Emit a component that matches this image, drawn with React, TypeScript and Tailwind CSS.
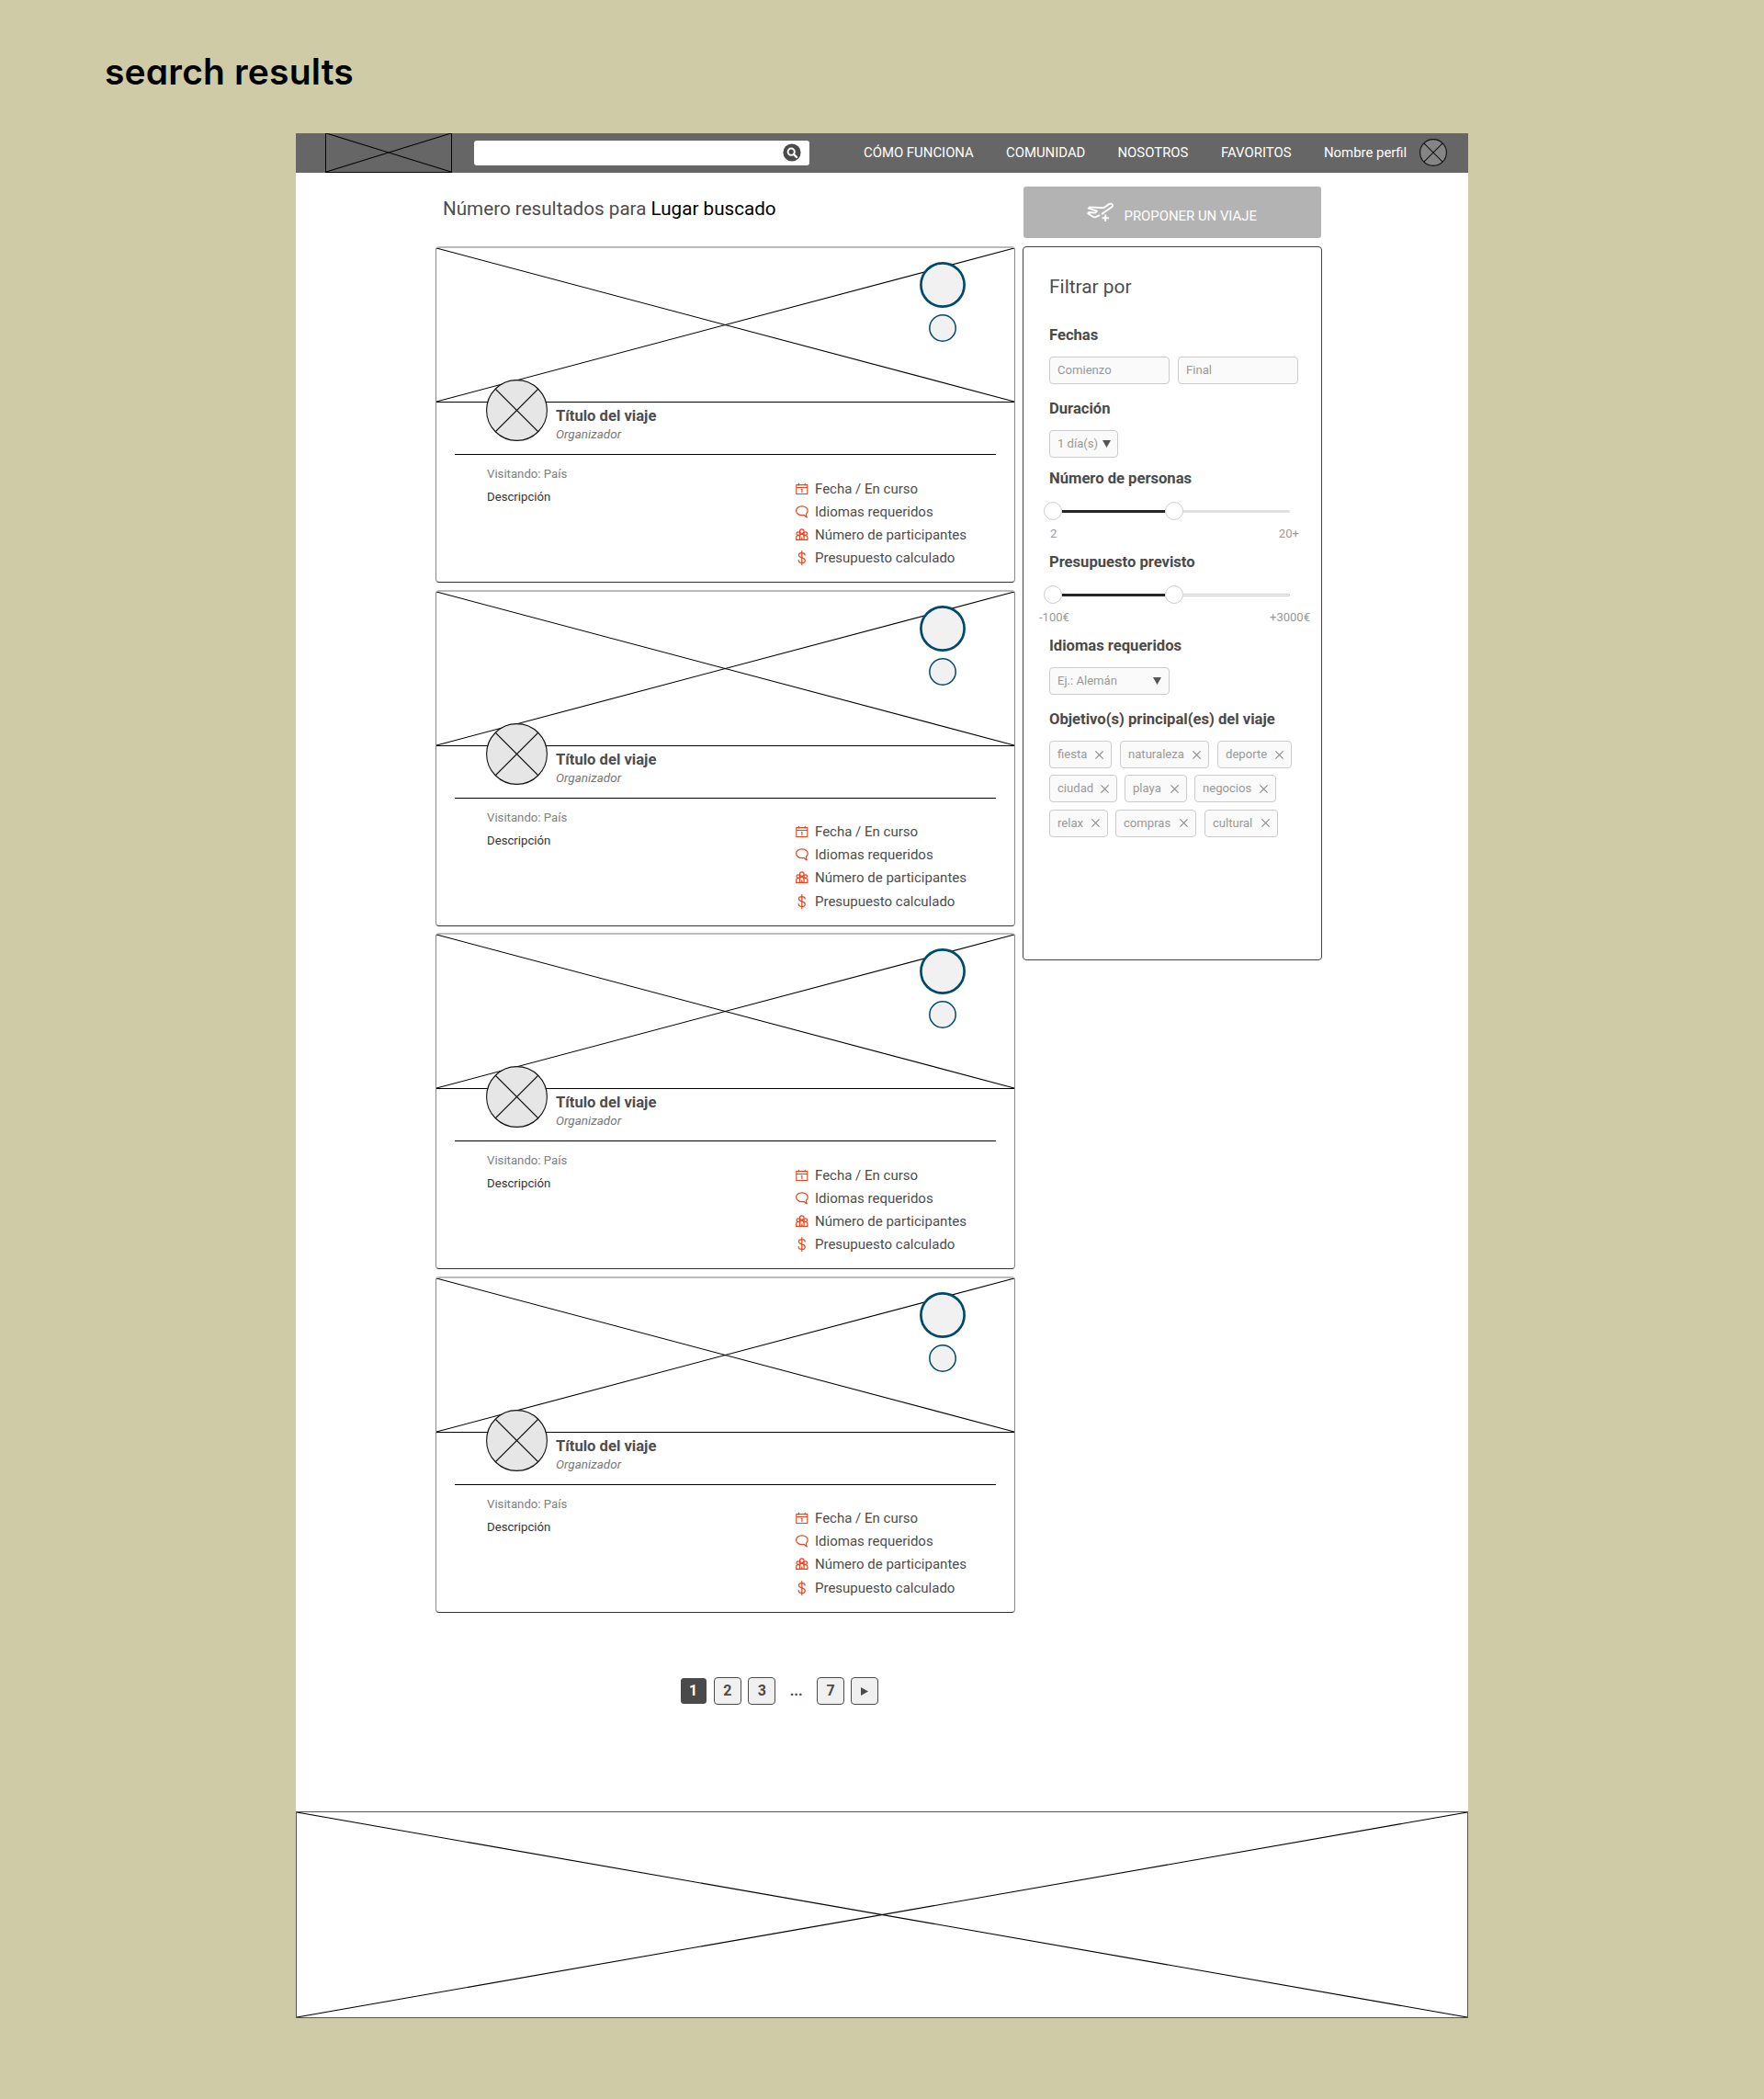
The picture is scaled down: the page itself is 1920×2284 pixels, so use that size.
import { ReactNode } from "react";

const RESULTS = [1, 2, 3, 4];

const TAGS: { label: string; width: string; gap: string }[][] = [
  [
    { label: "fiesta", width: "w-[68px]", gap: "" },
    { label: "naturaleza", width: "w-[97px]", gap: "ml-[9px]" },
    { label: "deporte", width: "w-[81px]", gap: "ml-[9px]" },
  ],
  [
    { label: "ciudad", width: "w-[74px]", gap: "" },
    { label: "playa", width: "w-[68px]", gap: "ml-2" },
    { label: "negocios", width: "w-[89px]", gap: "ml-2" },
  ],
  [
    { label: "relax", width: "w-[64px]", gap: "" },
    { label: "compras", width: "w-[88px]", gap: "ml-2" },
    { label: "cultural", width: "w-[80px]", gap: "ml-[9px]" },
  ],
];

function Cross() {
  return (
    <svg className="block h-full w-full" viewBox="0 0 100 100" preserveAspectRatio="none">
      <path d="M0 0L100 100M0 100L100 0" stroke="#000" strokeWidth="1.1" vectorEffect="non-scaling-stroke" fill="none" />
    </svg>
  );
}

function Avatar({ size, fill, className = "" }: { size: number; fill: string; className?: string }) {
  const r = size / 2 - 0.6;
  const c = size / 2;
  const d = r * 0.707;
  return (
    <svg className={className} width={size} height={size} viewBox={`0 0 ${size} ${size}`} fill="none" stroke="#111" strokeWidth="1.1">
      <circle cx={c} cy={c} r={r} fill={fill} />
      <path d={`M${c - d} ${c - d}L${c + d} ${c + d}M${c - d} ${c + d}L${c + d} ${c - d}`} />
    </svg>
  );
}

function CalendarIcon() {
  return (
    <svg width="14" height="14" viewBox="0 0 14 14" fill="none" stroke="#e8431a" strokeWidth="1.1">
      <path d="M.8 2.6H12.8V12.5H.8ZM.8 5.5H12.8M3.5 .8V3.6M10.2 .8V3.6M5.8 7.5H6.9V11" />
    </svg>
  );
}

function BubbleIcon() {
  return (
    <svg width="14" height="14" viewBox="0 0 14 14" fill="none" stroke="#e8431a" strokeWidth="1.2" strokeLinejoin="round">
      <path d="M6.9 .9C3.3 .9 .6 3 .6 5.8S3.3 10.7 6.9 10.7C7.8 10.7 8.6 10.6 9.3 10.4C10 11.5 11 12.4 12.3 12.9C11.7 11.7 11.4 10.4 11.5 9.1C12.6 8.2 13.2 7.1 13.2 5.8C13.2 3 10.5 .9 6.9 .9Z" />
    </svg>
  );
}

function PeopleIcon() {
  return (
    <svg width="14" height="14" viewBox="0 0 14 14" fill="none" stroke="#e8431a" strokeWidth="1.2">
      <circle cx="6.8" cy="3.1" r="2.3" />
      <circle cx="2.8" cy="5.6" r="1.8" />
      <circle cx="10.8" cy="5.6" r="1.8" />
      <path d="M4.5 12.2V9.4C4.5 7.2 5.4 6.2 6.8 6.2S9.1 7.2 9.1 9.4V12.2M.7 12.2V9.8C.7 8.4 1.4 7.6 2.8 7.6C3.4 7.6 4 7.8 4.4 8.2M12.9 12.2V9.8C12.9 8.4 12.2 7.6 10.8 7.6C10.2 7.6 9.6 7.8 9.2 8.2M.1 12.3H13.5M6.8 9.6V12.2" />
    </svg>
  );
}

function DollarIcon() {
  return (
    <svg width="14" height="16" viewBox="0 0 14 16" fill="none" stroke="#e8431a" strokeWidth="1.2" strokeLinecap="round">
      <path d="M6.8 .6V15.4M10.2 5C10.2 3.4 8.8 2.6 6.8 2.6S3.4 3.5 3.4 5.1C3.4 6.8 5 7.3 6.8 7.9S10.3 9.2 10.3 10.9S8.8 13.4 6.8 13.4S3.2 12.5 3.2 10.7" />
    </svg>
  );
}

function PlaneIcon() {
  return (
    <svg className="shrink-0" width="32" height="22" viewBox="0 0 32 22" fill="none" stroke="#fff" strokeWidth="1.9" strokeLinejoin="round" strokeLinecap="round">
      <path d="M17.6 12.6L28.2 5.2C29.6 4.1 29.4 1.8 27.4 1.6C26.4 1.5 25.6 1.9 24.8 2.4L19.2 6.2L4 5.4L2.6 6.6L12 9.6L10 11.6L3.4 11L2.2 12.2L8 16C9 16.5 10.2 16.4 11.2 15.9L14.4 14.4" />
      <path d="M21.2 13.6V21M17.5 17.3H24.9" strokeLinecap="butt" />
    </svg>
  );
}

function Caret({ className = "" }: { className?: string }) {
  return (
    <svg className={className} width="9" height="8" viewBox="0 0 9 8">
      <path d="M0 0H9L4.5 8Z" fill="#555" />
    </svg>
  );
}

function Detail({ icon, children }: { icon: ReactNode; children: ReactNode }) {
  return (
    <li className="flex h-[25.2px] items-center">
      <span className="flex w-[21px] items-center">{icon}</span>
      <span className="text-[15px] leading-5 text-[#4d4d4d]">{children}</span>
    </li>
  );
}

function TripCard() {
  return (
    <article className="relative h-[366px] w-[631px] rounded-[4px] border border-t-2 border-[#8a8a8a] border-t-[#bbb] border-b-[#333] bg-white">
      <div className="h-[168px] border-b border-black">
        <Cross />
      </div>
      <div className="absolute top-[15px] right-[53.5px] flex w-[50px] flex-col items-center gap-[7px]">
        <svg width="50" height="50" viewBox="0 0 50 50">
          <circle cx="25" cy="25" r="23.6" fill="#f1f1f1" stroke="#004a6e" strokeWidth="2.7" />
        </svg>
        <svg width="30" height="30" viewBox="0 0 30 30">
          <circle cx="15" cy="15" r="14.2" fill="#f1f1f1" stroke="#004a6e" strokeWidth="1.5" />
        </svg>
      </div>
      <Avatar size={67} fill="#e6e6e6" className="absolute top-[143px] left-[54px]" />
      <div className="mx-5 h-[57px] border-b border-black pt-[5px] pl-[110px]">
        <h3 className="text-[16.6px] leading-5 font-bold text-[#4d4d4d]">Título del viaje</h3>
        <p className="mt-px text-[13.5px] leading-4 text-[#777] italic">Organizador</p>
      </div>
      <div className="flex justify-between pl-[55px]">
        <div className="pt-[13px] text-[13.2px]">
          <p className="leading-4 text-[#808080]">Visitando: País</p>
          <p className="mt-[9px] leading-4 text-[#333]">Descripción</p>
        </div>
        <ul className="w-[238px] pt-6">
          <Detail icon={<CalendarIcon />}>Fecha / En curso</Detail>
          <Detail icon={<BubbleIcon />}>Idiomas requeridos</Detail>
          <Detail icon={<PeopleIcon />}>Número de participantes</Detail>
          <Detail icon={<DollarIcon />}>Presupuesto calculado</Detail>
        </ul>
      </div>
    </article>
  );
}

function Field({ children, className = "" }: { children: ReactNode; className?: string }) {
  return (
    <div className={`flex h-[30px] items-center rounded-[4px] border border-[#ccc] bg-[#fafafa] pl-2 text-[13.1px] leading-4 text-[#999] ${className}`}>
      {children}
    </div>
  );
}

function FilterTitle({ children, className = "" }: { children: ReactNode; className?: string }) {
  return <h3 className={`text-[16.6px] leading-5 font-bold whitespace-nowrap text-[#4a4a4a] ${className}`}>{children}</h3>;
}

function Slider({ hollow = false }: { hollow?: boolean }) {
  return (
    <div className="-ml-[6px] flex h-5 w-[268px] items-center">
      <span className="h-5 w-5 shrink-0 rounded-full border border-[#ccc] bg-white" />
      <span className="h-[3px] w-[112px] bg-[#262626]" />
      <span className="h-5 w-5 shrink-0 rounded-full border border-[#ccc] bg-white" />
      <span className={`h-[3px] flex-1 rounded-r-sm ${hollow ? "border border-l-0 border-[#ccc] bg-white" : "bg-[#e0e0e0]"}`} />
    </div>
  );
}

function Filters() {
  return (
    <section className="mt-[9px] h-[777px] w-[326px] rounded-[4px] border border-[#444] bg-white pt-[31px] pl-[28px]">
      <h2 className="text-[20.9px] leading-6 text-[#4d4d4d]">Filtrar por</h2>
      <FilterTitle className="mt-[31px]">Fechas</FilterTitle>
      <div className="mt-[13px] flex gap-[9px]">
        <Field className="w-[131px]">Comienzo</Field>
        <Field className="w-[131px]">Final</Field>
      </div>
      <FilterTitle className="mt-[17px]">Duración</FilterTitle>
      <Field className="mt-[13px] w-[75px]">
        1 día(s)
        <Caret className="ml-[5px]" />
      </Field>
      <FilterTitle className="mt-[13px]">Número de personas</FilterTitle>
      <div className="mt-[15px]">
        <Slider />
      </div>
      <div className="mt-[7px] flex w-[272px] justify-between pl-px text-[13.1px] leading-4 text-[#999]">
        <span>2</span>
        <span>20+</span>
      </div>
      <FilterTitle className="mt-[13px]">Presupuesto previsto</FilterTitle>
      <div className="mt-[15px]">
        <Slider hollow />
      </div>
      <div className="mt-[7px] -ml-[11px] flex w-[295px] justify-between text-[13px] leading-4 text-[#999]">
        <span>-100€</span>
        <span>+3000€</span>
      </div>
      <FilterTitle className="mt-[13px]">Idiomas requeridos</FilterTitle>
      <Field className="mt-[13px] w-[131px] justify-between pr-2">
        Ej.: Alemán
        <Caret />
      </Field>
      <FilterTitle className="mt-[17px]">Objetivo(s) principal(es) del viaje</FilterTitle>
      <div className="mt-[13px] flex flex-col gap-[7.3px]">
        {TAGS.map((row, i) => (
          <div key={i} className="flex">
            {row.map((tag) => (
              <Field key={tag.label} className={`justify-between pr-[8px] ${tag.width} ${tag.gap}`}>
                {tag.label}
                <svg width="9" height="9" viewBox="0 0 9 9" stroke="#888" strokeWidth="1.1">
                  <path d="M.4 .4L8.6 8.6M.4 8.6L8.6 .4" />
                </svg>
              </Field>
            ))}
          </div>
        ))}
      </div>
    </section>
  );
}

function PageButton({ children, active = false }: { children: ReactNode; active?: boolean }) {
  return (
    <span
      className={`flex items-center justify-center border border-[#4a4a4a] text-[16px] leading-5 font-bold ${
        active ? "m-px h-[28px] w-[28px] rounded-[3px] bg-[#4a4a4a] text-white" : "h-[30px] w-[30px] rounded-[4px] bg-[#f0f0f0] text-[#4a4a4a]"
      }`}
    >
      {children}
    </span>
  );
}

export default function App() {
  return (
    <div className="h-[2284px] w-[1920px] overflow-hidden bg-[#cfcba6] font-['Roboto',sans-serif]">
      <h1 className="h-[145px] pt-[54px] pl-[114px] font-['Inter',sans-serif] text-[39px] leading-[48px] font-semibold tracking-[0.17px] text-black [font-feature-settings:'cv11']">
        search results
      </h1>
      <div className="ml-[322px] flex h-[2051px] w-[1276px] flex-col bg-white">
        <header className="flex h-[43px] shrink-0 items-center bg-[#666] text-[14.9px] leading-5 whitespace-nowrap text-white">
          <div className="ml-[32px] h-[43px] w-[138px] border border-t-0 border-black">
            <Cross />
          </div>
          <div className="mb-px ml-[24px] flex h-[27px] w-[365px] items-center justify-end rounded-[3px] bg-white pr-[9px]">
            <svg width="20" height="20" viewBox="0 0 20 20" fill="none">
              <circle cx="10" cy="10" r="9.6" fill="#4a4a4a" />
              <circle cx="9.2" cy="9.2" r="3.6" stroke="#fff" strokeWidth="2" />
              <path d="M12 12L15 15" stroke="#fff" strokeWidth="2.4" strokeLinecap="round" />
            </svg>
          </div>
          <nav className="mb-[2px] flex">
            <span className="ml-[59px] w-[155px]">CÓMO FUNCIONA</span>
            <span className="w-[121.5px]">COMUNIDAD</span>
            <span className="w-[112.5px]">NOSOTROS</span>
            <span className="w-[112px]">FAVORITOS</span>
            <span className="w-[104px]">Nombre perfil</span>
          </nav>
          <Avatar size={30} fill="#858585" className="mb-px" />
        </header>
        <div className="flex gap-2 pl-[152px]">
          <main className="w-[632px]">
            <h2 className="h-[80px] pt-[27px] pl-2 text-[20.65px] leading-6 text-[#4d4d4d]">
              Número resultados para <span className="text-black">Lugar buscado</span>
            </h2>
            <div className="flex flex-col gap-[7.5px]">
              {RESULTS.map((n) => (
                <TripCard key={n} />
              ))}
            </div>
            <div className="mt-[70.5px] flex gap-[7.4px] pl-[265.5px]">
              <PageButton active>1</PageButton>
              <PageButton>2</PageButton>
              <PageButton>3</PageButton>
              <span className="w-[30px] text-center text-[16px] leading-[30px] font-bold text-[#4a4a4a]">...</span>
              <PageButton>7</PageButton>
              <PageButton>
                <svg width="8" height="9" viewBox="0 0 8 9">
                  <path d="M0 0L8 4.5L0 9Z" fill="#4a4a4a" />
                </svg>
              </PageButton>
            </div>
          </main>
          <aside className="-ml-px pt-[15px]">
            <button className="ml-px flex h-[56px] w-[324px] items-center rounded-[3px] bg-[#b3b3b3] pl-[68px] text-[14.9px] leading-5 text-white">
              <PlaneIcon />
              <span className="mt-[7px] ml-[9.5px]">PROPONER UN VIAJE</span>
            </button>
            <Filters />
          </aside>
        </div>
        <footer className="mt-auto h-[225px] border border-[#555]">
          <Cross />
        </footer>
      </div>
    </div>
  );
}
